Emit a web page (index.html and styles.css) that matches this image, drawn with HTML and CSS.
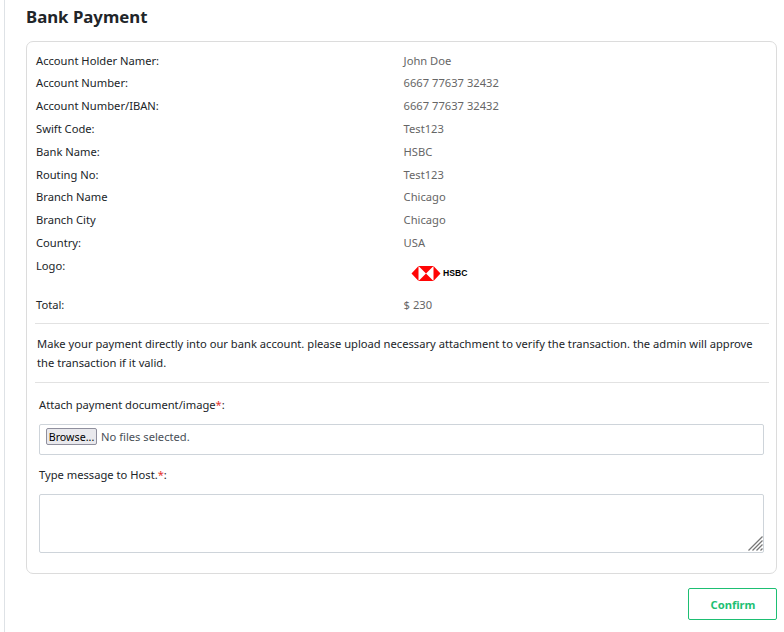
FILE: index.html
```html
<!DOCTYPE html>
<html lang="en">
<head>
<meta charset="utf-8">
<title>Bank Payment</title>
<link rel="stylesheet" href="styles.css">
</head>
<body>
<main class="page">
  <h1 class="title">Bank Payment</h1>
  <section class="card">
    <dl class="details">
      <dt>Account Holder Namer:</dt><dd>John Doe</dd>
      <dt>Account Number:</dt><dd>6667 77637 32432</dd>
      <dt>Account Number/IBAN:</dt><dd>6667 77637 32432</dd>
      <dt>Swift Code:</dt><dd>Test123</dd>
      <dt>Bank Name:</dt><dd>HSBC</dd>
      <dt>Routing No:</dt><dd>Test123</dd>
      <dt>Branch Name</dt><dd>Chicago</dd>
      <dt>Branch City</dt><dd>Chicago</dd>
      <dt>Country:</dt><dd>USA</dd>
      <dt>Logo:</dt>
      <dd class="logo">
        <svg width="30" height="15" viewBox="0 0 30 15" aria-hidden="true">
          <path fill="#ff0505" d="M.5 7.5 7.5 0v15zM29.5 7.5 22.5 0v15zM7.5 0h15L15 7.5zM7.5 15h15L15 7.5z"/>
        </svg>
        <span class="logo-name">HSBC</span>
      </dd>
      <dt>Total:</dt><dd>$ 230</dd>
    </dl>
    <p class="note">Make your payment directly into our bank account. please upload necessary attachment to verify the transaction. the admin will approve the transaction if it valid.</p>
    <form class="form">
      <div class="label">Attach payment document/image<span class="required">*</span>:</div>
      <div class="file">
        <button class="browse" type="button">Browse...</button>
        <span>No files selected.</span>
      </div>
      <div class="label">Type message to Host.<span class="required">*</span>:</div>
      <div class="message">
        <textarea class="input" aria-label="Message"></textarea>
        <svg class="grip" width="15" height="15" viewBox="0 0 15 15" aria-hidden="true">
          <path fill="none" stroke="#777" stroke-width="1.3" d="M.5 14.5 14.5.5M4.5 14.5l10-10M8.5 14.5l6-6M12.5 14.5l2-2"/>
        </svg>
      </div>
    </form>
  </section>
  <button class="confirm" type="button">Confirm</button>
</main>
</body>
</html>
```
FILE: styles.css
```css
* {
  box-sizing: border-box;
}

body {
  margin: 0;
  background: #fff;
  color: #212529;
  font-family: "Noto Sans", sans-serif;
  font-size: 11.18px;
}

.page {
  display: flex;
  flex-direction: column;
  height: 632px;
  margin-left: 4px;
  padding: 5px 7px 0 21px;
  border-left: 1px solid #dee2e6;
  overflow: hidden;
}

.title {
  margin: 0 0 12px;
  font-size: 16.8px;
  font-weight: 700;
  line-height: 24px;
}

.card {
  height: 533px;
  padding: 7.6px 7px 0 8px;
  border: 1px solid #dcdcdc;
  border-radius: 7px;
}

.details {
  display: grid;
  grid-template-columns: 367.6px 1fr;
  grid-template-rows: repeat(9, 22.8px) 38.8px 22.8px;
  margin: 0;
  padding-left: 1px;
  line-height: 22.8px;
}

.details dd {
  margin: 0;
  color: #666;
}

.details .logo {
  display: flex;
  align-items: center;
  gap: 2px;
  padding: 0 0 1px 7.4px;
}

.logo-name {
  color: #000;
  font: 700 8.6px/15px "Liberation Sans", sans-serif;
}

.note {
  height: 60px;
  margin: 6.4px 0 0;
  padding: 10px 2px 0;
  border: solid #e2e2e2;
  border-width: 1px 0;
  line-height: 19px;
}

.form {
  padding: 12px 5px 0 4px;
}

.label {
  margin-bottom: 9px;
  line-height: 20px;
}

.required {
  color: #e3342f;
}

.file {
  display: flex;
  align-items: flex-start;
  gap: 4px;
  height: 31px;
  margin-bottom: 10px;
  padding: 3px 6px;
  border: 1px solid #ced4da;
  border-radius: 2px;
  color: #495057;
  line-height: 18px;
}

.browse {
  width: 51px;
  height: 17px;
  padding: 1px 0 0;
  border: 1px solid #8f8f9d;
  border-radius: 2px;
  background: #e9e9ed;
  color: #000;
  font: inherit;
  font-size: 10.7px;
  line-height: 14px;
}

.message {
  position: relative;
  height: 59px;
}

.input {
  display: block;
  width: 100%;
  height: 100%;
  padding: 6px;
  border: 1px solid #ced4da;
  border-radius: 2px;
  font: inherit;
  resize: none;
}

.grip {
  position: absolute;
  right: 1.5px;
  bottom: 1.5px;
}

.confirm {
  align-self: flex-end;
  width: 89px;
  height: 32px;
  margin-top: 14px;
  padding: 0 0 0 1px;
  border: 1px solid #1dbf73;
  border-radius: 2px;
  background: #fff;
  color: #1dbf73;
  font: 700 11.18px "Noto Sans", sans-serif;
}
```
